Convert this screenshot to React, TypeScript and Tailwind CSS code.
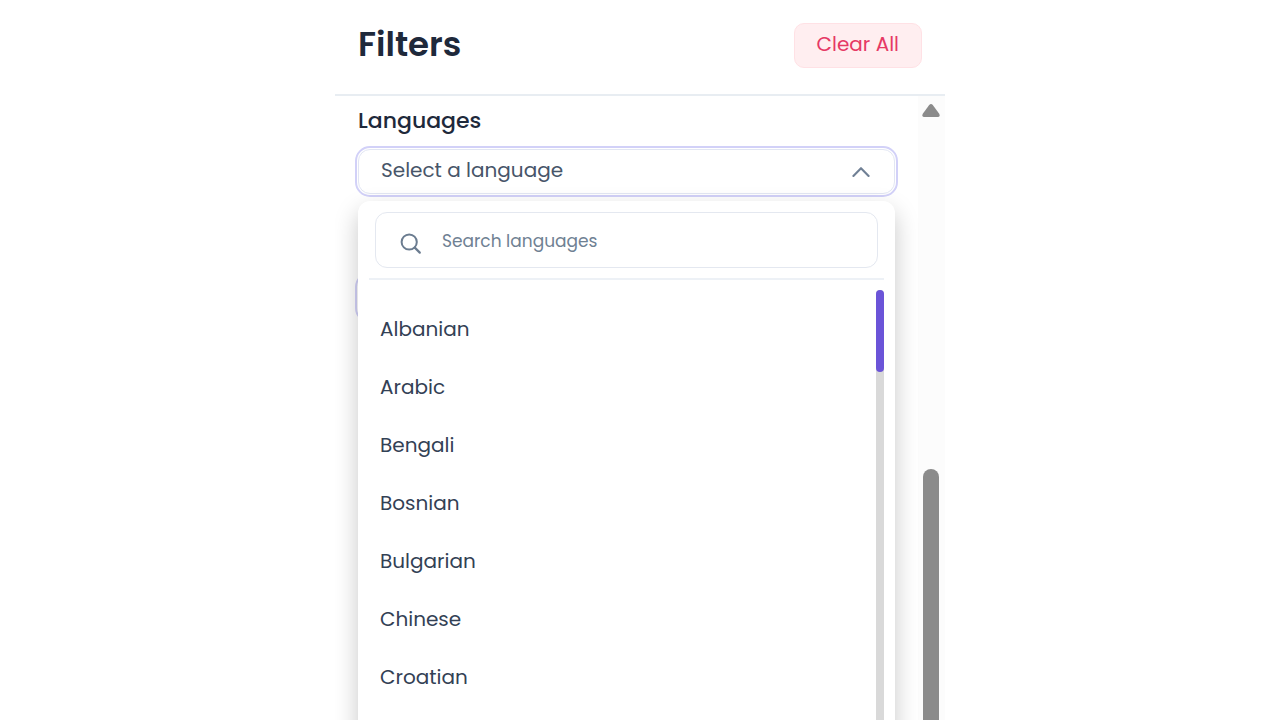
import { useState } from "react";

const LANGUAGES = [
  "Albanian",
  "Arabic",
  "Bengali",
  "Bosnian",
  "Bulgarian",
  "Chinese",
  "Croatian",
];

function SearchIcon() {
  return (
    <svg width="22" height="22" viewBox="0 0 22 22" fill="none" aria-hidden="true">
      <circle cx="9.2" cy="9" r="7.6" stroke="#6b7c90" strokeWidth="2" />
      <path d="M14.8 14.6L19.8 19.6" stroke="#6b7c90" strokeWidth="2.2" strokeLinecap="round" />
    </svg>
  );
}

function ChevronIcon({ isOpen }: { isOpen: boolean }) {
  return (
    <svg
      width="18"
      height="12"
      viewBox="0 0 18 12"
      fill="none"
      aria-hidden="true"
      className={isOpen ? "" : "rotate-180"}
    >
      <path
        d="M1.4 10L9 2.2L16.6 10"
        stroke="#708095"
        strokeWidth="2.1"
        strokeLinecap="round"
        strokeLinejoin="round"
      />
    </svg>
  );
}

interface LanguageMenuProps {
  onSelect: (language: string) => void;
}

function LanguageMenu({ onSelect }: LanguageMenuProps) {
  const [query, setQuery] = useState("");
  const matches = LANGUAGES.filter((language) =>
    language.toLowerCase().includes(query.trim().toLowerCase())
  );

  return (
    <div className="absolute inset-x-0 top-full z-10 mt-[7px] rounded-xl bg-white px-[11px] pt-[11px] shadow-[0_10px_24px_rgba(0,0,0,0.22)]">
      <div className="border-b-2 border-[#edf1f6] px-1.5 pb-2.5">
        <label className="flex h-14 items-center rounded-xl border border-[#e4e8f0] pl-6">
          <span className="pt-2">
            <SearchIcon />
          </span>
          <input
            type="text"
            aria-label="Search languages"
            placeholder="Search languages"
            value={query}
            onChange={(e) => setQuery(e.target.value)}
            className="ml-5 min-w-0 flex-1 bg-transparent pt-1 text-[17px] text-[#334155] outline-none placeholder:text-[#6f8193]"
          />
        </label>
      </div>

      <div className="flex h-[640px] pt-2.5">
        <ul className="flex-1 pt-2.5">
          {matches.map((language) => (
            <li key={language}>
              <button
                type="button"
                onClick={() => onSelect(language)}
                className="flex h-[58px] w-full items-center px-[11px] text-left text-xl text-[#334155] hover:bg-slate-50"
              >
                {language}
              </button>
            </li>
          ))}
        </ul>
        <div className="w-2 rounded-full bg-[#d9d9d9]">
          <div className="h-[82px] rounded-full bg-[#6b54d8]" />
        </div>
      </div>
    </div>
  );
}

export default function App() {
  const [isOpen, setIsOpen] = useState(true);
  const [selected, setSelected] = useState("");

  const handleSelect = (language: string) => {
    setSelected(language);
    setIsOpen(false);
  };

  return (
    <main className="mx-auto flex h-screen w-full max-w-[610px] flex-col overflow-hidden bg-white font-['Poppins','Inter',sans-serif]">
      <header className="flex h-24 shrink-0 items-center justify-between border-b-2 border-[#e8edf2] px-[23px] pb-1">
        <h1 className="pb-0.5 text-[34px] font-semibold text-[#1e293b]">Filters</h1>
        <button
          type="button"
          onClick={() => setSelected("")}
          className="h-[45px] rounded-[10px] border border-[#ffe1e5] bg-[#ffeef0] px-[22px] pb-0.5 text-xl text-[#e63965]"
        >
          Clear All
        </button>
      </header>

      <div className="flex min-h-0 flex-1">
        <section className="min-w-0 flex-1 px-[23px] pt-2">
          <label
            htmlFor="language"
            className="block pt-px text-[22px] leading-8 font-medium text-[#1e293b]"
          >
            Languages
          </label>
          <div className="relative mt-3">
            <button
              id="language"
              type="button"
              aria-haspopup="listbox"
              aria-expanded={isOpen}
              onClick={() => setIsOpen(!isOpen)}
              className="flex h-[45px] w-full items-center justify-between rounded-xl border border-[#e2e6f3] pr-6 pl-[22px] text-xl text-[#475569] outline-2 outline-offset-1 outline-[#d2d1f8]"
            >
              <span className="pb-1">{selected || "Select a language"}</span>
              <ChevronIcon isOpen={isOpen} />
            </button>
            {isOpen && <LanguageMenu onSelect={handleSelect} />}
          </div>
          <div className="mt-[81px] mr-3 h-[45px] rounded-xl outline-2 outline-offset-1 outline-[#d2d1f8]" />
        </section>

        <div className="flex w-[27px] flex-col items-center bg-[#fcfcfc] pt-2 pr-0.5">
          <svg width="18" height="14" viewBox="0 0 18 14" aria-hidden="true">
            <path
              d="M7.2 1Q9 -.9 10.8 1L17.2 9.7Q18.6 13 15.6 13H2.4Q-.6 13 .8 9.7Z"
              fill="#8b8b8b"
            />
          </svg>
          <div className="mt-[351px] w-4 flex-1 rounded-t-full bg-[#8b8b8b]" />
        </div>
      </div>
    </main>
  );
}
